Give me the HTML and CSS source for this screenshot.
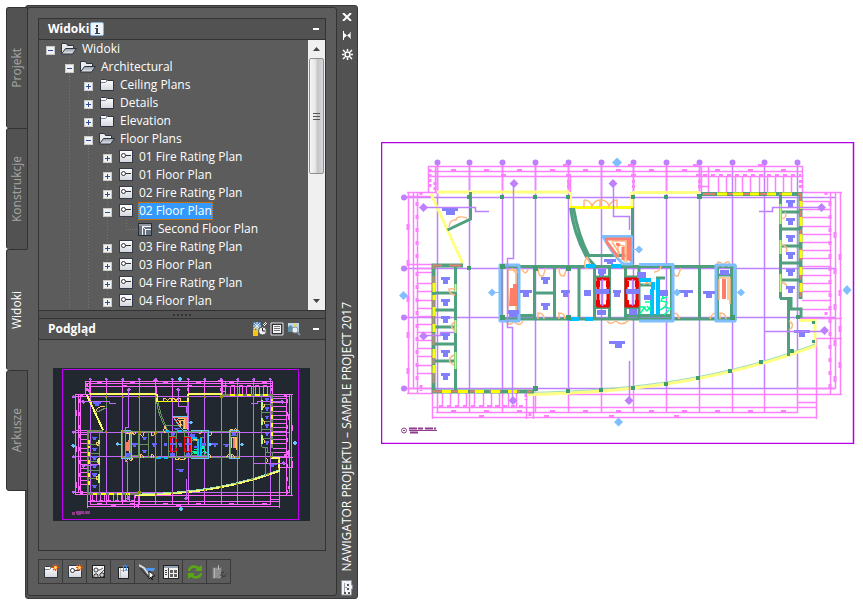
FILE: index.html
```html
<!DOCTYPE html>
<html lang="pl">
  <head>
    <meta charset="UTF-8" />
    <title>Nawigator projektu</title>
    <link rel="stylesheet" href="styles.css">
  </head>

  <body>
    <!-- shared shapes -->
    <svg class="defs" aria-hidden="true">
      <defs>
        <linearGradient id="sheet" x1="0" y1="0" x2="0" y2="1">
          <stop offset="0" stop-color="#fff" />
          <stop offset="1" stop-color="#d4d7de" />
        </linearGradient>
        <linearGradient id="flap" x1="0" y1="0" x2="0" y2="1">
          <stop offset="0" stop-color="#8f98a6" />
          <stop offset="1" stop-color="#eceef2" />
        </linearGradient>
      </defs>
      <symbol id="i-open" viewBox="0 0 16 16">
        <path d="M.5 12.500V2.500h5l1 2h6V8" fill="#e9ebef" stroke="#2f3540" />
        <path d="M.500 13L4.500 7.500h11l-4 5.500z" fill="url(#flap)" stroke="#2f3540" />
      </symbol>
      <symbol id="i-folder" viewBox="0 0 16 16">
        <path d="M1.500 13.500V3.500l1-1h4l2 1h6v10z" fill="url(#sheet)" stroke="#2f3540" />
        <path d="M2 5.500h4.500l2-2" fill="none" stroke="#7d8592" />
      </symbol>
      <symbol id="i-view" viewBox="0 0 16 16">
        <rect x="1.500" y="1.500" width="13" height="12" fill="url(#sheet)" stroke="#343b48" />
        <circle cx="5.500" cy="6.500" r="2" fill="#fff" stroke="#333" />
        <path d="M7.500 6.500H13" stroke="#333" />
      </symbol>
      <symbol id="i-model" viewBox="0 0 16 16">
        <rect x="1.500" y="2.500" width="13" height="12" fill="#6a7382" stroke="#262d38" />
        <path d="M2 3h12v2H2z" fill="#8f97a4" />
        <path d="M5 5.500h9M5.500 5v9M14 8.500H8.500V14" fill="none" stroke="#f2f4f7" />
        <path d="M6 6l3 3" stroke="#f2f4f7" />
      </symbol>
      <symbol id="i-spark" viewBox="0 0 7 7">
        <path d="M3.500 0v7M0 3.500h7M1 1l5 5M6 1L1 6" stroke="#ff4a00" stroke-width="1.200" />
        <circle cx="3.500" cy="3.500" r="1.500" fill="#ffe36b" />
      </symbol>

      <symbol id="plan" viewBox="0 0 474 302">
        <rect class="frame" x="0.5" y="0.5" width="472" height="301" />
        <!-- structural grid -->
        <path class="grid" d="M56.500 20V247M88.500 20V247M121.500 20V247M154.500 20V247M187.500 20V247M220.500 20V247M252.500 20V247M285.500 20V247M318.500 20V247M351.500 20V247M383.500 20V247M416.500 20V247M23 55.500H454M23 126.500H454M23 175.500H454M23 246.500H454" />
        <path class="bubble" d="M56.500 20.500h0M88.500 20.500h0M121.500 20.500h0M154.500 20.500h0M187.500 20.500h0M220.500 20.500h0M252.500 20.500h0M285.500 20.500h0M318.500 20.500h0M351.500 20.500h0M383.500 20.500h0M416.500 20.500h0M23 55.500h0M23 126.500h0M23 175.500h0M23 246.500h0" />
        <!-- dimensions: top, left, right, bottom -->
        <path class="dim" d="M47 24.500H422M47 29.500H422M47 34.500H422M47.500 24V50M54.500 24V50M56.500 24V55M88.500 24V50M121.500 24V50M154.500 24V50M187.500 24V50M189.500 34V50M220.500 24V55M252.500 24V50M285.500 24V50M318.500 24V50M320.500 24V50M327.500 24V50M337.500 34V50M345.500 34V50M354.500 34V50M361.500 34V50M369.500 34V50M378.500 34V50M386.500 34V50M394.500 34V50M402.500 34V50M410.500 34V50M421.500 24V50M320 44.500H327" />
        <path class="dim" d="M27.500 50V252M32.500 50V247M36.500 50V252M26 50.500H56M26 54.500H51M26 122.500H52M36 126.500H52M36 130.500H52M36 141.500H52M36 149.500H52M36 158.500H52M36 166.500H52M36 174.500H52M36 182.500H52M36 190.500H52M36 198.500H52M36 206.500H52M36 214.500H52M36 223.500H52M36 231.500H52M26 246.500H52M26 251.500H52" />
        <path class="dim" d="M449.500 50V253M454.500 50V247M459.500 50V253M421 50.500H461M421 59.500H450M421 67.500H450M421 75.500H450M421 84.500H450M421 92.500H450M421 100.500H450M421 108.500H450M421 116.500H450M421 124.500H450M421 133.500H450M421 141.500H450M421 149.500H450M421 158.500H450M421 167.500H450M418 176.500H461M436 196.500H461M416 246.500H454M187 252.500H461" />
        <path class="dim" d="M51 265.500H436M55 270.500H417M51 275.500H436M416 260.500H436M51.500 250V277M56.500 247V271M61.500 251V266M69.500 251V266M77.500 251V266M85.500 251V266M93.500 251V266M102.500 251V266M110.500 251V266M118.500 251V266M127.500 251V266M135.500 251V266M145.500 251V277M152.500 251V277M88.500 247V271M121.500 247V271M154.500 247V271M187.500 247V271M220.500 247V271M252.500 247V271M285.500 247V271M318.500 247V271M351.500 247V271M383.500 247V271M416.500 247V271M435.500 196V277" />
        <path class="note" stroke-dasharray="5 28" d="M70 28.500H420M70 269.500H410" />
        <path class="note" stroke-dasharray="5 60" d="M120 33.500H320M98 274.500H310M182 23.500H420" />
        <path class="note" stroke-dasharray="4 4" d="M322 33.500H420M58 264.500H144" />
        <path class="note" stroke-dasharray="4 9" d="M36 60V125M449 60V250M36 130V245" />
        <path class="note" stroke-dasharray="6 30" d="M27 82V240M454 90V240M459 112V240M188 38V48" />
        <path class="note" d="M49 27v20M54 40v8M187.500 38v9M252.500 38v9M318.500 38v9M419.500 38v9M40 50v5M40 243v6M445 50v6M445 170v6M145 252v6M149 271v4" stroke-dasharray="3 2" />
        <!-- curtain walls -->
        <path class="glass" d="M56 50H188M252 50.500H319M50 52L82 122M189.500 50V65M251 50V65M146 252.500C260 250 345 237 434 204V178.500H418" />
        <path class="glass-strong" d="M189 65.500H252" />
        <path class="soft" d="M146 250.500C260 248 345 235 434 202" />
        <!-- walls -->
        <path class="wall" d="M89.500 50V77L66.500 88M189.500 66Q193 92 205 114L215 125M192.500 66Q197 93 208 114M204 113.500H251M251.500 66V122" />
        <path class="wall" d="M74.500 124V248M54 151H75M54 168H75M54 185H75M54 202H75M54 219H75M399.500 52V156.500M399 70H420M399 87H420M399 104H420M399 121H420M399 138H420M399 156.500H410V167H420M407 167H420V176M407.500 156V214" />
        <path class="wall" d="M120 124.500H354V177H120zM137 125V177M153.500 125V177M173.500 125V177M198 125V177M213.500 125V177M228.500 125V177M244.500 125V177M258 125V177M290.500 125V177M318.500 125V177M336.500 125V177M350.500 125V177M154 151H174M214 135H229M214 165.500H229M245 135H258M245 165.500H258M245 173.500H291M258 143H272M275 136H284M338 133H350M138 173.500H154" />
        <path class="heavy" d="M82 123.500H52.500V249.500H153M320 52H419.500V157" />
        <path class="brick" d="M80 123.500H52.500V249.500H151M322 52H419.500V155" stroke-dasharray="12 7" />
        <path class="pane-strip" d="M53 141V150M53 153V158M53 165V174M53 182V190M53 207V216M53 223V231M61 249.500H70M77 249.500H87M94 249.500H103M110 249.500H119M127 249.500H136M336 52H346M352 52H362M369 52H378M386 52H395M401 52H411M420 59V67M420 75V84M420 92V100M420 108V116M420 125V133M420 141V150" />
        <path class="lime" d="M74.500 142V150M74.500 178V191M74.500 210V227M399.500 62V82M399.500 98V112M399.500 132V150" />
        <!-- doors and stairs -->
        <path class="door" d="M68 85q1-8 7-7q1-5 11-2M203 65v-7M203 58q6 0 8 6q3-6 8-6v7M220 65v-7q6 0 8 6q3-6 8-6v7M131 126q5 9 7 1M140 126q5 9 7 1M157 126q0 9 5 8l3-8M178 126q0 9 5 8l3-8M124 178q5 8 9 1q5 7 9 0M157 177v-6q6 0 6 6M178 177v-6q6 0 6 6M206 115q-5 8 0 12q5-4 0-12M226 178q2 6 9 1q6 6 13-1M273 130q6 0 7-6M262 142q5 0 7-6v7M292 126q0 9 5 8l3-8M329 177q2-6 6-6v6M292 177v-6q6 0 6 6M337 125v-5q4 0 5 4q3-5 6-4v5M339 177v-6q6 0 6 6M74 153q-6-1-6-6h6M74 180q-7 3 0 9M73 213q-9 5 0 10M400 77q7-1 4-7M400 102q8 3 5 8M400 140q8 2 5 8M408 179q7 4 0 9" />
        <path class="halo" d="M119 123H138V179H119zM335 123H354V179H335zM222 94.500H250.500V122H242q-8-8-13-16z" />
        <path class="halo" d="M258 122.500H292V179H258" />
        <path class="door" d="M231 99H246V119H243V104L237 103v13M127 128h8v42h-8zM338 136h11v26" />
        <path class="stair" d="M224 97H249V119M225 99L237 115M242 105V118M247 98V118M239 103l-4-1" />
        <path class="stair-fill" d="M129 146h3v-4h4v22h-8zM341 137h4v20h-4z" />
        <path class="door" d="M338 137v21M347 137v21M127 144v22M245 98v19M231 100l8 12" />
        <path class="lift" d="M217 137h10v27h-10zM245 137h11v27h-11z" />
        <path class="lift-edge" d="M217 139v6M217 158v6M227 139v6M227 158v6M246 139v6M246 158v6M256 139v6M256 158v6" />
        <path class="pipe" d="M271 147V173M277 137V173M258 138H270M205 124H214M230 124H240M188 177H198M204 177H212M272 140v8" />
        <path class="plant" d="M259 172l4-6 3 3 4-5M279 150l3 5-2 4 6 1-2 5 6 2M259 165h6M283 173l5-5M264 160h6M266 164l4 5M279 168l5-3M280 157l6-2" />
        <path class="grid" d="M251.500 137V164M221.500 137V164" />
        <path class="column" d="M119 122h5v5h-5zM152 124h5v5h-5zM185 124h5v5h-5zM349 173h5v5h-5zM185 173h5v5h-5zM119 173h5v5h-5zM86 53h4v4h-4zM119 53h4v4h-4zM152 53h4v4h-4zM185 53h4v4h-4zM250 53h4v4h-4zM283 53h4v4h-4zM316 52h5v5h-5zM86 124h4v4h-4zM152 244h5v5h-5zM185 247h4v4h-4zM218 246h4v4h-4zM250 244h4v4h-4zM283 240h4v4h-4zM315 234h4v4h-4zM347 227h4v4h-4zM378 218h4v4h-4zM409 207h4v4h-4zM431 179h3v3h-3zM431 198h3v3h-3zM415 173h4v4h-4z" />
        <!-- furniture -->
        <path class="desk" d="M60 135h9v3h-2v4h-5v-4h-2zM60 157h9v3h-2v4h-5v-4h-2zM60 174h9v3h-2v4h-5v-4h-2zM60 191h9v3h-2v4h-5v-4h-2zM60 208h9v3h-2v4h-5v-4h-2zM60 231h9v3h-2v4h-5v-4h-2zM405 58h9v3h-2v4h-5v-4h-2zM405 76h9v3h-2v4h-5v-4h-2zM405 93h9v3h-2v4h-5v-4h-2zM405 110h9v3h-2v4h-5v-4h-2zM405 127h9v3h-2v4h-5v-4h-2zM405 144h9v3h-2v4h-5v-4h-2zM61 66h16v3h-3v4h-9v-4h-4zM160 135h9v3h-2v4h-5v-4h-2zM160 161h9v3h-2v4h-5v-4h-2zM139 148h12v3h-3v4h-6v-4h-3zM180 148h9v3h-2v4h-5v-4h-2zM203 148h7v6h-7zM215 147h13v5h-13zM232 148h8v3h-1v4h-6v-4h-1zM245 147h13v5h-13zM217 127h8v5h-2v2h-5v-2h-1zM216 168h9v5h-9zM248 167h8v6h-8zM223 117h12v3h-3v2h-6v-2h-3zM256 130h9v6h-9zM263 153h8v5h-8zM278 148h9v6h-9zM298 148h14v3h-5v4h-4v-4h-5zM322 149h12v3h-3v4h-6v-4h-3zM339 128h9v5h-9zM126 168h12v4h-2v3h-8v-3h-2zM228 199h16v3h-3v4h-7v-4h-6zM413 188h16v3h-5v4h-6v-4h-5z" />
        <!-- section marks -->
        <path class="grid" d="M42 65.500H94.500V69.500H108M132.500 42V116.500H126.500V185.500H131.500V258M232.500 42V74.500H248.500V88M248.500 219V258M440 65.500H391.500V69.500H378M443 189.500H383M42 193.500H59.500V190.500H73" />
        <path class="mark" d="M38 65.500l4.500-4.500 4.500 4.500-4.500 4.500zM128.500 41.500l4.500-4.500 4.500 4.500-4.500 4.500zM227.500 41.500l4.500-4.500 4.500 4.500-4.500 4.500zM436 65.500l4.500-4.500 4.500 4.500-4.500 4.500zM439 188.500l4.500-4.500 4.500 4.500-4.500 4.500zM38 194l4.500-4.500 4.500 4.500-4.500 4.500zM127.500 258.500l4.500-4.500 4.500 4.500-4.500 4.500zM243.500 258.500l4.500-4.500 4.500 4.500-4.500 4.500z" />
        <path class="tag" d="M231 20.500l5-5 5 5-5 5zM18 153.500l4.500-4.500 4.500 4.500-4.500 4.500zM107 150.500l4-4 4 4-4 4zM254 107.500l4-4 4 4-4 4zM292 150.500l4-4 4 4-4 4zM356 150.500l4-4 4 4-4 4zM461.500 148l4.500-5 4.500 5-4.500 5zM233 280l4.500-4.500 4.500 4.500-4.500 4.500z" />
        <path class="tag-line" d="M111 150.500H119M250 107.500H258M354 150.500H360" />
        <!-- title mark -->
        <circle class="stamp" cx="23" cy="288.500" r="2.500" />
        <path class="stamp" d="M28 288.500H56M22 288.500h2" />
        <path class="stamp stamp-text" d="M28 286.500H55M29 290.500H38" />
      </symbol>
    </svg>

    <nav class="tabs">
      <button class="tab"><span>Projekt</span></button>
      <button class="tab"><span>Konstrukcje</span></button>
      <button class="tab active"><span>Widoki</span></button>
      <button class="tab"><span>Arkusze</span></button>
    </nav>

    <main class="palette">
      <div class="content">
        <section class="panel">
          <header class="panel-head">
            <h2>Widoki</h2>
            <button class="info" aria-label="Informacje">
              <svg width="5" height="9" viewBox="0 0 5 9"><path d="M1 0h2v2H1zM0 3h3v5h2v1H0V8h1V4H0z" fill="#3c4450" /></svg>
            </button>
            <button class="minimize" aria-label="Zwiń Widoki"></button>
          </header>
          <div class="tree-area">
            <ul class="tree">
              <li>
                <div class="row"><button class="toggle open" aria-label="Zwiń"></button><svg class="icon"><use href="#i-open" /></svg><span class="label">Widoki</span></div>
                <ul>
                  <li>
                    <div class="row"><button class="toggle open" aria-label="Zwiń"></button><svg class="icon"><use href="#i-open" /></svg><span class="label">Architectural</span></div>
                    <ul>
                      <li><div class="row"><button class="toggle" aria-label="Rozwiń"></button><svg class="icon"><use href="#i-folder" /></svg><span class="label">Ceiling Plans</span></div></li>
                      <li><div class="row"><button class="toggle" aria-label="Rozwiń"></button><svg class="icon"><use href="#i-folder" /></svg><span class="label">Details</span></div></li>
                      <li><div class="row"><button class="toggle" aria-label="Rozwiń"></button><svg class="icon"><use href="#i-folder" /></svg><span class="label">Elevation</span></div></li>
                      <li>
                        <div class="row"><button class="toggle open" aria-label="Zwiń"></button><svg class="icon"><use href="#i-open" /></svg><span class="label">Floor Plans</span></div>
                        <ul>
                          <li><div class="row"><button class="toggle" aria-label="Rozwiń"></button><svg class="icon"><use href="#i-view" /></svg><span class="label">01 Fire Rating Plan</span></div></li>
                          <li><div class="row"><button class="toggle" aria-label="Rozwiń"></button><svg class="icon"><use href="#i-view" /></svg><span class="label">01 Floor Plan</span></div></li>
                          <li><div class="row"><button class="toggle" aria-label="Rozwiń"></button><svg class="icon"><use href="#i-view" /></svg><span class="label">02 Fire Rating Plan</span></div></li>
                          <li>
                            <div class="row"><button class="toggle open" aria-label="Zwiń"></button><svg class="icon"><use href="#i-view" /></svg><span class="label selected">02 Floor Plan</span></div>
                            <ul class="leaf">
                              <li><div class="row"><i class="twig"></i><svg class="icon"><use href="#i-model" /></svg><span class="label">Second Floor Plan</span></div></li>
                            </ul>
                          </li>
                          <li><div class="row"><button class="toggle" aria-label="Rozwiń"></button><svg class="icon"><use href="#i-view" /></svg><span class="label">03 Fire Rating Plan</span></div></li>
                          <li><div class="row"><button class="toggle" aria-label="Rozwiń"></button><svg class="icon"><use href="#i-view" /></svg><span class="label">03 Floor Plan</span></div></li>
                          <li><div class="row"><button class="toggle" aria-label="Rozwiń"></button><svg class="icon"><use href="#i-view" /></svg><span class="label">04 Fire Rating Plan</span></div></li>
                          <li><div class="row"><button class="toggle" aria-label="Rozwiń"></button><svg class="icon"><use href="#i-view" /></svg><span class="label">04 Floor Plan</span></div></li>
                        </ul>
                      </li>
                    </ul>
                  </li>
                </ul>
              </li>
            </ul>
            <div class="scrollbar">
              <button class="arrow" aria-label="W górę"><svg width="7" height="4"><path d="M0 4L3.500 0 7 4z" fill="#444" /></svg></button>
              <div class="thumb"><i></i><i></i><i></i></div>
              <button class="arrow" aria-label="W dół"><svg width="7" height="4"><path d="M0 0h7L3.500 4z" fill="#444" /></svg></button>
            </div>
          </div>
        </section>

        <div class="splitter"><i></i><i></i><i></i><i></i><i></i></div>

        <section class="panel">
          <header class="panel-head">
            <h2>Podgląd</h2>
            <div class="head-tools">
              <button aria-label="Odśwież podgląd">
                <svg width="14" height="14" viewBox="0 0 14 14">
                  <path d="M0 0h8v8H0z" fill="#4b7eb0" />
                  <path d="M4 0v8M0 4h8M1 1l6 6M7 1L1 7" stroke="#d9ecff" />
                  <path d="M0 8h5v6H0z" fill="#f5c518" /><path d="M1 8V6h4v2" fill="none" stroke="#ffe36b" />
                  <circle cx="9.500" cy="9" r="4" fill="#f2f2f2" stroke="#555" />
                  <path d="M9.500 6v3h3" fill="none" stroke="#222" />
                  <path d="M10 3l3-3M11 4l3-3" stroke="#eee" />
                </svg>
              </button>
              <button aria-label="Szczegóły">
                <svg width="14" height="14" viewBox="0 0 14 14">
                  <path d="M1 1h12v12H1z" fill="#333" stroke="#e4e7ef" />
                  <path d="M3 3h8v8H3z" fill="#f4f4f4" />
                  <path d="M4 4.500h6M4 6.500h6M4 8.500h6" stroke="#777" />
                </svg>
              </button>
              <button aria-label="Podgląd rysunku">
                <svg width="14" height="14" viewBox="0 0 14 14">
                  <path d="M1 1h11v9H1z" fill="#b9d6ea" /><path d="M1 10V5l3-2 3 4 3-1v4z" fill="#5f8ea8" />
                  <circle cx="8" cy="3" r="1.500" fill="#ffd23c" />
                  <circle cx="8" cy="8" r="3" fill="#e8eef4" stroke="#8894a2" />
                  <path d="M10 10l3 3" stroke="#8894a2" stroke-width="2" />
                </svg>
              </button>
            </div>
            <button class="minimize" aria-label="Zwiń Podgląd"></button>
          </header>
          <div class="preview-area">
            <div class="preview">
              <svg class="plan-dark" viewBox="0 0 474 302" role="img" aria-label="Podgląd planu"><use href="#plan" /></svg>
            </div>
          </div>
        </section>

        <div class="toolbar">
          <button aria-label="Nowa kategoria">
            <svg class="icon"><use href="#i-folder" /><use href="#i-spark" x="9" y="0" width="7" height="7" /></svg>
          </button>
          <button aria-label="Nowy widok">
            <svg class="icon"><use href="#i-view" /><use href="#i-spark" x="9" y="0" width="7" height="7" /></svg>
          </button>
          <button aria-label="Regeneruj widok">
            <svg class="icon" viewBox="0 0 16 16">
              <rect x="1.500" y="1.500" width="12" height="12" fill="url(#sheet)" stroke="#222" />
              <circle cx="5" cy="6" r="2" fill="none" stroke="#444" />
              <path d="M7 6h2l3-2M10 9l3-3" stroke="#555" fill="none" />
              <path d="M5 9v6M2 12h6M3 10l4 4M7 10l-4 4M11 8v6M8 11h6M9 9l4 4M13 9l-4 4" stroke="#333" />
              <circle cx="5" cy="12" r="1" fill="#fff" /><circle cx="11" cy="11" r="1" fill="#fff" />
            </svg>
          </button>
          <button class="group-start" aria-label="Dołącz">
            <svg class="icon" viewBox="0 0 16 16">
              <rect x="3.500" y="3.500" width="10" height="11" fill="url(#sheet)" stroke="#222" />
              <path d="M5.500 4v10M5 6.500h8" stroke="#b6bac2" />
              <path d="M8.500 8V1.500h3V6H10" fill="none" stroke="#3d8bea" />
            </svg>
          </button>
          <button aria-label="Wybierz">
            <svg class="icon" viewBox="0 0 16 16">
              <path d="M0 1l5 3 6 8" fill="none" stroke="#dde0e6" stroke-width="2" />
              <path d="M1 4l8 9" stroke="#222" />
              <path d="M6 4h10l-1 3H8z" fill="#4f96ee" />
              <path d="M10 7v8l2-2 1 3 1-1-1-3h3z" fill="#fff" stroke="#111" />
            </svg>
          </button>
          <button aria-label="Układ">
            <svg class="icon" viewBox="0 0 16 16">
              <rect x="0.500" y="1.500" width="15" height="13" fill="#f1f2f4" stroke="#222" />
              <path d="M1 3h14" stroke="#97a3b5" stroke-width="2" /><path d="M5.500 4v10M2 6.500h2M2 8.500h2M2 10.500h2" stroke="#444" />
              <path d="M7 6h3v3H7zM11 6h3v3h-3zM7 10h3v3H7zM11 10h3v3h-3z" fill="#606060" />
            </svg>
          </button>
          <button aria-label="Odśwież projekt">
            <svg class="icon" viewBox="0 0 16 16">
              <path d="M1 7C1 1 8 0 12 3l3-2v6H8l2-2C7 3 4 4 3 7zM15 9c0 6-7 7-11 4l-3 2V9h7l-2 2c3 2 6 1 7-2z" fill="#5aa513" />
            </svg>
          </button>
          <button aria-label="Odłącz" disabled>
            <svg class="icon" viewBox="0 0 16 16">
              <path d="M1.500 3.500h9v11h-9z" fill="#8e8e8e" stroke="#6b6b6b" />
              <path d="M3.500 4v10M7.500 6V1" stroke="#b5b5b5" />
              <path d="M10 9l3-1M9 11h3M13 12h2M10 14l3-2M15 10h1" stroke="#333" />
            </svg>
          </button>
        </div>
      </div>

      <aside class="titlebar">
        <button aria-label="Zamknij">
          <svg width="10" height="8" viewBox="0 0 10 8"><path d="M1 0l8 8M9 0L1 8" stroke="#fff" stroke-width="2" /></svg>
        </button>
        <button aria-label="Ukryj automatycznie">
          <svg width="10" height="9" viewBox="0 0 10 9"><path d="M1.500 0v9" stroke="#fff" /><path d="M2 2l3 2.500L2 7zM8 2v5L5 4.500z" fill="#fff" /><path d="M8.500 1v7" stroke="#bbb" /></svg>
        </button>
        <button aria-label="Właściwości">
          <svg width="11" height="11" viewBox="0 0 11 11"><circle cx="5.500" cy="5.500" r="2.500" fill="none" stroke="#fff" stroke-width="1.500" /><path d="M5.500 0v2M5.500 9v2M0 5.500h2M9 5.500h2M1 1l2 2M8 8l2 2M10 1L8 3M3 8l-2 2" stroke="#fff" stroke-width="1.500" /></svg>
        </button>
        <h1>NAWIGATOR PROJEKTU – SAMPLE PROJECT 2017</h1>
        <svg width="12" height="16" viewBox="0 0 12 16">
          <path d="M.5.500h10V5h1v4h-1v6H.5z" fill="#f2f3f5" stroke="#8a93a0" />
          <path d="M3.500 3v10M3 7.500h3" stroke="#9aa1ac" />
          <path d="M6 4h2v2H6zM6 8h2v2H6zM3 12h2v2H3zM7 12h2v2H7z" fill="#555" />
        </svg>
      </aside>
    </main>

    <svg class="plan-light" viewBox="0 0 474 302" role="img" aria-label="Plan piętra"><use href="#plan" /></svg>
  </body>
</html>
```
FILE: styles.css
```css
* {
  box-sizing: border-box;
}

body {
  margin: 0;
  padding: 5px 8px 8px 6px;
  display: flex;
  align-items: flex-start;
  background: #fff;
  color: #fff;
  font: 12px/18px "Open Sans", "Noto Sans", sans-serif;
}

button {
  padding: 0;
  border: none;
  background: none;
  color: inherit;
  font: inherit;
}

h1,
h2 {
  margin: 0;
  font-size: 12px;
}

ul {
  margin: 0;
  padding: 0;
  list-style: none;
}

svg {
  display: block;
}

.defs {
  position: absolute;
  width: 0;
  height: 0;
}

/* side tabs */
.tabs {
  display: flex;
  flex-direction: column;
  flex: none;
  width: 22px;
  margin: 2px -3px 0 0;
  z-index: 1;
}

.tab {
  display: flex;
  align-items: center;
  justify-content: center;
  height: 121px;
  background: #525252;
  border: 1px solid #333;
  border-bottom: none;
  border-radius: 3px 0 0 3px;
  color: #a6a6a6;
}

.tab:last-child {
  border-bottom: 1px solid #333;
}

.tab.active {
  background: #5c5c5c;
  border-right-color: #5c5c5c;
  color: #fff;
}

.tab span,
.titlebar h1 {
  writing-mode: vertical-rl;
  transform: rotate(180deg);
}

/* palette window */
.palette {
  display: flex;
  flex: none;
  width: 333px;
  padding: 1px 0 2px 1px;
  background: #525252;
  border: 1px solid #3a3a3a;
  border-radius: 3px;
}

.content {
  flex: 1;
  padding: 10px 10px 11px;
  background: #5c5c5c;
  border: 1px solid #333;
  border-radius: 3px;
}

.panel {
  border: 1px solid #333;
}

.panel-head {
  display: flex;
  align-items: center;
  height: 21px;
  padding: 0 6px 0 9px;
  background: #525252;
  border-bottom: 1px solid #333;
}

.info {
  display: flex;
  align-items: center;
  justify-content: center;
  width: 14px;
  height: 14px;
  margin-left: 1px;
  background: #eef4fa;
  border: 1px solid #7fb2e0;
  border-radius: 2px;
}

.minimize {
  width: 6px;
  height: 2px;
  margin-left: auto;
  background: #fff;
}

.head-tools {
  display: flex;
  gap: 3px;
  margin-left: auto;
}

.head-tools + .minimize {
  margin-left: 12px;
}

/* tree */
.tree-area {
  display: flex;
  background: #5c5c5c;
}

.tree {
  flex: 1;
  padding-left: 7px;
}

.tree ul {
  margin-left: 19px;
  background: repeating-linear-gradient(#757575 0 1px, transparent 1px 3px) 4px 0 / 1px 100% no-repeat;
}

.tree ul.leaf {
  background-size: 1px 9px;
}

.row {
  display: flex;
  align-items: center;
  height: 18px;
}

.toggle {
  width: 9px;
  height: 9px;
  margin: 3px 6px 0 0;
  background:
    linear-gradient(#2c4a9c, #2c4a9c) center / 5px 1px no-repeat,
    linear-gradient(#2c4a9c, #2c4a9c) center / 1px 5px no-repeat,
    #f2f2f2;
  border: 1px solid #c9c9c9;
}

.toggle.open {
  background:
    linear-gradient(#2c4a9c, #2c4a9c) center / 5px 1px no-repeat,
    #f2f2f2;
}

.twig {
  width: 11px;
  margin-left: 4px;
  border-top: 1px dotted #757575;
}

.icon {
  width: 16px;
  height: 16px;
}

.label {
  margin-left: 4px;
  padding: 0 1px;
}

.label.selected {
  background: #3399ff;
  outline: 1px dotted #c06a14;
  outline-offset: -1px;
}

.scrollbar {
  display: flex;
  flex-direction: column;
  align-items: center;
  width: 17px;
  background: #f0f0f0;
}

.arrow {
  display: flex;
  align-items: center;
  justify-content: center;
  width: 17px;
  height: 18px;
}

.arrow:last-child {
  margin-top: auto;
}

.thumb {
  display: flex;
  flex-direction: column;
  align-items: center;
  justify-content: center;
  gap: 2px;
  width: 15px;
  height: 116px;
  background: linear-gradient(90deg, #f6f6f6, #e4e4e6 45%, #c4c4c8 55%, #d8d8dc);
  border: 1px solid #8e8e8e;
  border-radius: 2px;
}

.thumb i {
  width: 7px;
  height: 1px;
  background: #555;
}

.splitter {
  display: flex;
  align-items: center;
  justify-content: center;
  gap: 2px;
  height: 7px;
  background: #525252;
  border: solid #333;
  border-width: 0 1px;
}

.splitter i {
  width: 2px;
  height: 2px;
  background: #333;
}

/* preview */
.preview-area {
  padding: 28px 15px 29px 14px;
}

.preview {
  height: 153px;
  padding: 1px 9px;
  background: #212830;
}

/* toolbar */
.toolbar {
  display: flex;
  width: max-content;
  margin-top: 8px;
  border: 1px solid #3a3a3a;
  border-left: none;
}

.toolbar button {
  display: flex;
  align-items: center;
  justify-content: center;
  width: 24px;
  height: 23px;
  border-left: 1px solid #3a3a3a;
}

.titlebar {
  display: flex;
  flex-direction: column;
  align-items: center;
  width: 20px;
}

.titlebar button {
  display: flex;
  align-items: center;
  justify-content: center;
  width: 19px;
  height: 19px;
}

.titlebar h1 {
  margin: auto 0 9px;
  font-weight: normal;
}

/* floor plan, light and dark colours */
.plan-light {
  flex: 1;
  min-width: 0;
  margin: 137px 0 0 23px;
  --frame: #b400e6;
  --grid: #bf80ff;
  --dim: #ff80ff;
  --glass: #ffff80;
  --wall: #50a080;
  --brick: #e08070;
  --desk: #8080ff;
  --tag: #80bfff;
  --door: #ffb980;
  --column: #409c70;
  --line: 1.5px;
  --note: 3px;
  --wall-width: 3px;
  --glass-width: 3px;
  --heavy: 4px;
  --halo: 3px;
  --bubble: 6px;
}

.plan-dark {
  width: 237px;
  height: 151px;
  shape-rendering: crispEdges;
  --frame: #c000f0;
  --grid: #c466fa;
  --dim: #ff64ff;
  --glass: #ffff64;
  --wall: #669464;
  --brick: #77865a;
  --desk: #6464ff;
  --tag: #64c8ff;
  --door: #ffc864;
  --column: #949410;
  --line: 1px;
  --note: 2px;
  --wall-width: 1px;
  --glass-width: 2px;
  --heavy: 2px;
  --halo: 1px;
  --bubble: 3px;
}

#plan path,
#plan rect,
#plan circle {
  fill: none;
  vector-effect: non-scaling-stroke;
}

#plan .frame {
  stroke: var(--frame);
  stroke-width: var(--line);
}

#plan .grid {
  stroke: var(--grid);
  stroke-width: var(--line);
}

#plan .bubble {
  stroke: var(--grid);
  stroke-width: var(--bubble);
  stroke-linecap: round;
}

#plan .dim {
  stroke: var(--dim);
  stroke-width: var(--line);
}

#plan .note {
  stroke: var(--dim);
  stroke-width: var(--note);
}

#plan .glass {
  stroke: var(--glass);
  stroke-width: var(--glass-width);
}

#plan .glass-strong {
  stroke: #ffff00;
  stroke-width: var(--halo);
}

#plan .soft {
  stroke: #a0e0b8;
}

.plan-dark .soft {
  stroke: none;
}

#plan .wall {
  stroke: var(--wall);
  stroke-width: var(--wall-width);
}

#plan .heavy {
  stroke: var(--wall);
  stroke-width: var(--heavy);
}

#plan .brick {
  stroke: var(--brick);
  stroke-width: 2px;
}

#plan .pane-strip {
  stroke: #ffff00;
  stroke-width: var(--glass-width);
}

#plan .lime {
  stroke: #bfff80;
  stroke-width: 2px;
}

#plan .door {
  stroke: var(--door);
  stroke-width: var(--line);
}

#plan .halo {
  stroke: var(--tag);
  stroke-width: var(--halo);
  stroke-linejoin: round;
}

#plan .stair {
  stroke: #ff8070;
  stroke-width: var(--halo);
}

#plan .stair-fill {
  fill: #ff7f66;
}

#plan .lift {
  stroke: #f00000;
  stroke-width: var(--halo);
}

#plan .lift-edge {
  stroke: #f00000;
  stroke-width: var(--heavy);
}

#plan .pipe {
  stroke: #00bfff;
  stroke-width: var(--heavy);
}

#plan .plant {
  stroke: #00ff99;
  stroke-width: var(--line);
}

#plan .column {
  fill: var(--column);
}

#plan .desk {
  fill: var(--desk);
}

#plan .mark {
  fill: var(--grid);
}

#plan .tag {
  fill: var(--tag);
}

#plan .tag-line {
  stroke: var(--tag);
}

#plan .stamp {
  stroke: #8f3a8f;
}

#plan .stamp-text {
  stroke-width: 2px;
  stroke-dasharray: 8 1 5 2;
}
```
